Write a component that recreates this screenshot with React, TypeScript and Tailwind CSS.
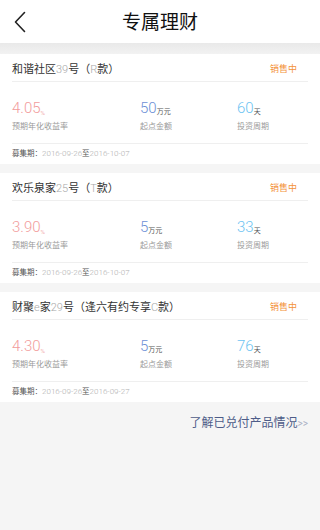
import React from "react";

type Item = {
  name: React.ReactNode;
  rate: string;
  amount: string;
  days: string;
  start: string;
  end: string;
};

const L = ({ children }: { children: React.ReactNode }) => (
  <span className="text-[#a8a8a8] font-light">{children}</span>
);

const items: Item[] = [
  {
    name: (
      <>
        和谐社区<L>39</L>号（<L>R</L>款）
      </>
    ),
    rate: "4.05",
    amount: "50",
    days: "60",
    start: "2016-09-26",
    end: "2016-10-07",
  },
  {
    name: (
      <>
        欢乐泉家<L>25</L>号（<L>T</L>款）
      </>
    ),
    rate: "3.90",
    amount: "5",
    days: "33",
    start: "2016-09-26",
    end: "2016-10-07",
  },
  {
    name: (
      <>
        财聚<L>e</L>家<L>29</L>号（逢六有约专享<L>C</L>款）
      </>
    ),
    rate: "4.30",
    amount: "5",
    days: "76",
    start: "2016-09-26",
    end: "2016-09-27",
  },
];

function Card({ item }: { item: Item }) {
  return (
    <div className="bg-white h-[110px] flex flex-col">
      <div className="mx-[12px] h-[28px] border-b border-[#efefef] flex items-center justify-between pt-[3px]">
        <div className="text-[11px] text-[#333333] leading-none">{item.name}</div>
        <div className="text-[9px] text-[#f3923a] mr-[11px] leading-none">销售中</div>
      </div>
      <div className="mx-[12px] h-[62px] border-b border-[#efefef] flex pt-[20px]">
        <div className="w-[128px] flex flex-col">
          <div className="flex items-end leading-none h-[14px]">
            <span className="text-[15px] font-light text-[#f29c9c] leading-none">{item.rate}</span>
            <span className="text-[6px] text-[#f2b0b0] leading-none">%</span>
          </div>
          <div className="text-[8px] text-[#9a9a9a] mt-[7px] leading-none">预期年化收益率</div>
        </div>
        <div className="w-[97px] flex flex-col">
          <div className="flex items-end leading-none h-[14px]">
            <span className="text-[15px] font-light text-[#6d8fd6] leading-none">{item.amount}</span>
            <span className="text-[7px] text-[#555555] leading-none">万元</span>
          </div>
          <div className="text-[8px] text-[#9a9a9a] mt-[7px] leading-none">起点金额</div>
        </div>
        <div className="flex flex-col">
          <div className="flex items-end leading-none h-[14px]">
            <span className="text-[15px] font-light text-[#6cc3f2] leading-none">{item.days}</span>
            <span className="text-[7px] text-[#555555] leading-none">天</span>
          </div>
          <div className="text-[8px] text-[#9a9a9a] mt-[7px] leading-none">投资周期</div>
        </div>
      </div>
      <div className="mx-[12px] flex-1 flex items-center text-[7.5px] leading-none text-[#555555]">
        <span>募集期：</span>
        <span className="text-[#b0b0b0] font-light text-[8px]">{item.start}</span>
        <span>至</span>
        <span className="text-[#b0b0b0] font-light text-[8px]">{item.end}</span>
      </div>
    </div>
  );
}

export default function App() {
  return (
    <div
      className="w-[320px] h-[530px] bg-[#f5f5f5] overflow-hidden flex flex-col"
      style={{ fontFamily: "Roboto, 'Noto Sans CJK SC', sans-serif" }}
    >
      <div className="h-[43px] bg-white relative flex items-center justify-center">
        <svg
          className="absolute left-[13px] top-[11px]"
          width="14"
          height="22"
          viewBox="0 0 14 22"
          fill="none"
        >
          <path d="M11.5 1.5 L2.5 11 L11.5 20.5" stroke="#222222" strokeWidth="1.6" strokeLinecap="round" strokeLinejoin="round" />
        </svg>
        <span className="text-[19px] text-[#111111] pt-[3px]">专属理财</span>
      </div>
      <div className="h-[11px] bg-gradient-to-b from-[#e9e9e9] to-[#f2f2f2]" />
      <div className="flex flex-col gap-[9px]">
        {items.map((it, i) => (
          <Card key={i} item={it} />
        ))}
      </div>
      <div className="flex justify-end items-center pr-[12px] mt-[12px]">
        <span className="text-[12px] text-[#4d5c88]">了解已兑付产品情况</span>
        <span className="text-[10px] text-[#a9b0c4]">&gt;&gt;</span>
      </div>
    </div>
  );
}
